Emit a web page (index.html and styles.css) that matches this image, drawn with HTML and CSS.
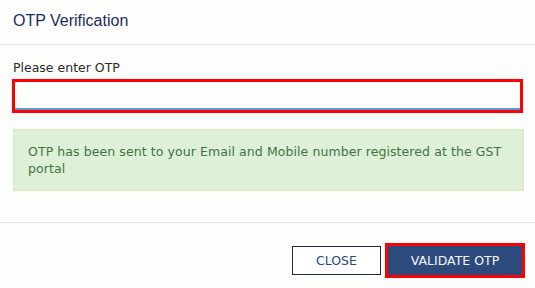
FILE: index.html
```html
<!DOCTYPE html>
<html>
<head>
<meta charset="utf-8">
<link rel="stylesheet" href="styles.css">
</head>
<body>
<div class="modal">
  <div class="modal-header">
    <h4 class="modal-title">OTP Verification</h4>
  </div>
  <div class="modal-body">
    <label class="field-label" for="otp">Please enter OTP</label>
    <input class="otp-input" id="otp" type="text">
    <div class="alert-success">OTP has been sent to your Email and Mobile number registered at the GST portal</div>
  </div>
  <div class="modal-footer">
    <button class="btn btn-close">CLOSE</button>
    <button class="btn btn-primary">VALIDATE OTP</button>
  </div>
</div>
</body>
</html>
```
FILE: styles.css
```css
html, body {
  margin: 0;
  padding: 0;
  background: #fdfefc;
}
.modal {
  width: 535px;
  height: 288px;
  font-family: "DejaVu Sans", Verdana, sans-serif;
  font-size: 12.5px;
  line-height: 17px;
}
.modal-header {
  height: 45px;
  border-bottom: 1px solid #e3e4e3;
  box-sizing: border-box;
  padding: 0 13px;
  display: flex;
  align-items: center;
}
.modal-title {
  margin: 0;
  font-family: "Liberation Sans", Arial, sans-serif;
  font-weight: normal;
  font-size: 16px;
  line-height: 18px;
  color: #1d2b5e;
  position: relative;
  top: -1px;
}
.modal-body {
  padding: 14px 11px 0 13px;
  height: 178px;
  box-sizing: border-box;
  border-bottom: 1px solid #e3e4e3;
}
.field-label {
  display: block;
  color: #2a2a2a;
  margin-bottom: 6px;
}
.otp-input {
  display: block;
  box-sizing: border-box;
  width: 505px;
  height: 28px;
  margin: 0 0 0 2px;
  padding: 0 6px;
  border: none;
  border-bottom: 2px solid #5b9bd5;
  background: #fdfefc;
  outline: 3px solid #ff0000;
  box-shadow: 3px 0 4px 2px rgba(160, 190, 240, 0.15);
}
.alert-success {
  margin-top: 19px;
  background: #dff0d8;
  border: 1px solid #d4e8c6;
  color: #3c763d;
  padding: 13px 14px 14px 14px;
  height: 62px;
  box-sizing: border-box;
  letter-spacing: 0.08px;
}
.modal-footer {
  display: flex;
  justify-content: flex-end;
  gap: 7px;
  padding: 23px 13px 0 0;
}
.btn {
  height: 29px;
  box-sizing: border-box;
  font-family: "DejaVu Sans", Verdana, sans-serif;
  font-size: 12.5px;
  padding: 0;
  cursor: pointer;
}
.btn-close {
  width: 89px;
  background: #ffffff;
  border: 1px solid #1a2a48;
  color: #2b4878;
}
.btn-primary {
  width: 134px;
  background: #2c4b7c;
  border: none;
  color: #f4f6fb;
  outline: 3px solid #ff0000;
}
```
